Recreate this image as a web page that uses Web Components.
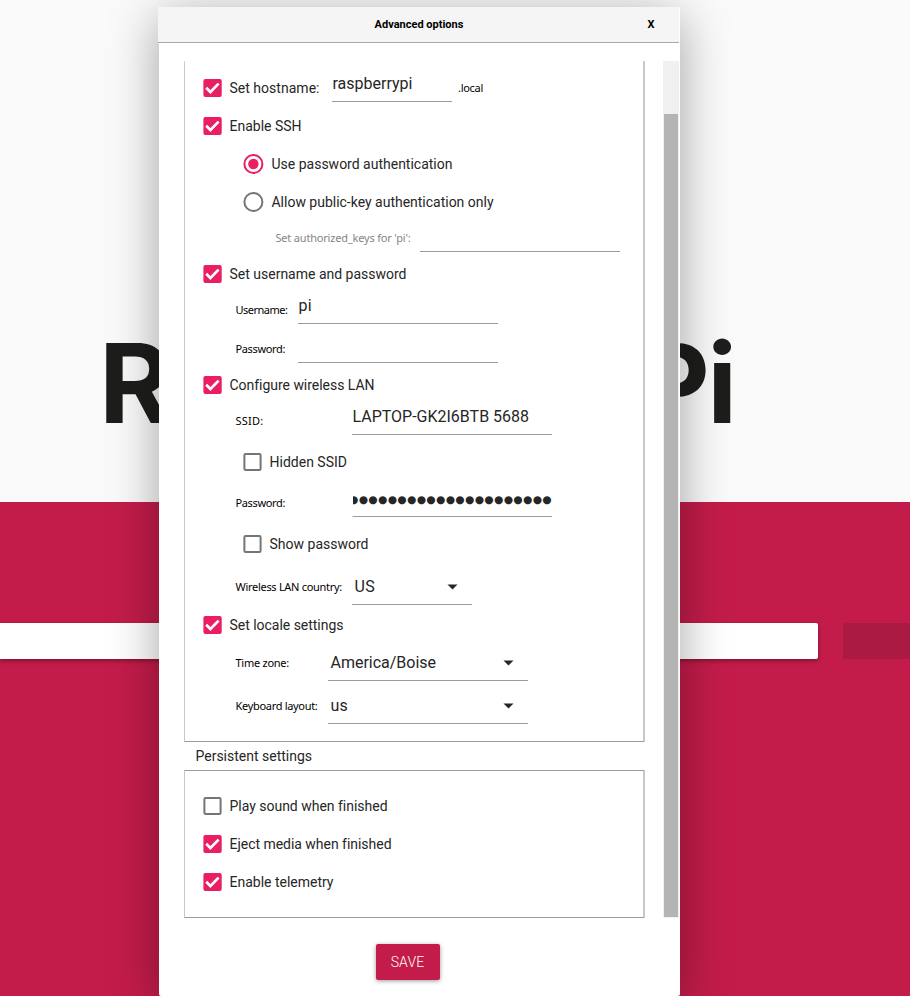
<!DOCTYPE html>
<html lang="en"><head><meta charset="utf-8"><title>Advanced options</title>
<style>
html,body{margin:0;height:996px;overflow:hidden;background:#fafafa;font-family:Roboto,sans-serif;color:#262626}
</style></head><body>
<imager-backdrop></imager-backdrop>
<options-dialog>
  <options-group style="height:680px" open-top>
    <field-row style="margin:10px 0 2px;padding-left:18px"><check-box checked w="90">Set hostname:</check-box><text-field style="width:120px;margin-left:12.5px" w="80">raspberrypi</text-field><small-label style="margin-left:5.5px" w="25">.local</small-label></field-row>
    <check-box checked w="72">Enable SSH</check-box>
    <radio-button checked w="181">Use password authentication</radio-button>
    <radio-button w="222">Allow public-key authentication only</radio-button>
    <field-row style="padding-left:90px"><small-label muted w="135" style="width:145px">Set authorized_keys for 'pi':</small-label><text-field style="width:200px"></text-field></field-row>
    <check-box checked w="177">Set username and password</check-box>
    <field-row style="margin-bottom:5px"><small-label style="width:63px" w="52">Username:</small-label><text-field style="width:200px" w="13.5">pi</text-field></field-row>
    <field-row><small-label style="width:63px" w="49.5">Password:</small-label><text-field style="width:200px"></text-field></field-row>
    <check-box checked w="144.5">Configure wireless LAN</check-box>
    <field-row style="margin-bottom:5px"><small-label style="width:117px" w="28">SSID:</small-label><text-field style="width:200px" w="176.5">LAPTOP-GK2I6BTB 5688</text-field></field-row>
    <check-box indent w="77.5">Hidden SSID</check-box>
    <field-row style="margin:5px 0"><small-label style="width:117px" w="49.5">Password:</small-label><text-field style="width:200px" secret w="203">●●●●●●●●●●●●●●●●●●●●●</text-field></field-row>
    <check-box indent w="99">Show password</check-box>
    <field-row tall style="margin-top:5px"><small-label style="width:117px" w="106.5">Wireless LAN country:</small-label><combo-box style="width:120px" w="20.5">US</combo-box></field-row>
    <check-box checked w="114">Set locale settings</check-box>
    <field-row tall style="margin-bottom:5px"><small-label style="width:93px" w="53.5">Time zone:</small-label><combo-box style="width:200px" w="105.5">America/Boise</combo-box></field-row>
    <field-row tall><small-label style="width:93px" w="82">Keyboard layout:</small-label><combo-box style="width:200px" w="17.5">us</combo-box></field-row>
  </options-group>
  <group-title w="116.5">Persistent settings</group-title>
  <options-group style="height:146px">
    <check-box style="margin-top:16px" w="157.5">Play sound when finished</check-box>
    <check-box checked w="161.5">Eject media when finished</check-box>
    <check-box checked w="104">Enable telemetry</check-box>
  </options-group>
</options-dialog>
<script>
// Base: renders a shadow template and tracks its text out to the width given in "w".
class Base extends HTMLElement{
  connectedCallback(){
    if(this.shadowRoot)return;
    this.attachShadow({mode:'open'}).innerHTML='<style>:host{display:flex;box-sizing:border-box;white-space:pre}.t{flex:none;display:inline-block}</style>'+this.view();
    const t=this.shadowRoot.querySelector('.t'),w=+this.getAttribute('w');
    if(t&&w){const n=this.textContent.length;t.style.letterSpacing=((w-t.getBoundingClientRect().width)/n)+'px';}
  }
}
const def=(n,v)=>customElements.define(n,class extends Base{view(){return v.call(this)}});

def('imager-backdrop',()=>`<style>
:host{flex-direction:column;height:996px;width:910px;background:#fafafa}
.logo{height:502px;box-sizing:border-box;padding:316px 173px 0 99px;display:flex;justify-content:space-between;font:660 110px/134px Inter,sans-serif;color:#1d1d1b}
.p{letter-spacing:-2.5px}
.band{flex:1;background:#c31c4a;padding-top:121px;display:flex;gap:25px;align-items:flex-start}
.a{width:818px;height:36px;background:#fff;border-radius:0 2px 2px 0;box-shadow:0 2px 4px rgba(0,0,0,.35)}
.b{flex:1;height:36px;background:#ab1a42;border-radius:2px 0 0 2px}
</style><div class="logo"><span>R</span><span><span class="p">P</span>i</span></div><div class="band"><div class="a"></div><div class="b"></div></div>`);

def('options-dialog',()=>`<style>
:host{position:absolute;left:159px;top:7px;width:521px;height:989px;flex-direction:column;background:#fff;border-radius:2px;box-shadow:0 10px 50px rgba(0,0,0,.36)}
header{flex:none;height:36px;box-sizing:border-box;border-bottom:1px solid #a9a9a9;background:#f5f5f5;display:grid;grid-template-columns:57px 1fr 57px;align-items:center;text-align:center;font:700 11px/14px Roboto,sans-serif;color:#000;margin:0 1px 0 -1px;padding:1px 0 0 1px}
header span:last-child{padding-left:1px}
main{height:857px;margin:18px 1px 0 25px;display:flex;justify-content:space-between}
.col{width:461px;display:flex;flex-direction:column}
.bar{width:16px;background:#f0f0f0;padding:53px 1px 1px;box-sizing:border-box}
.thumb{height:100%;background:#b4b4b4}
footer{display:flex;justify-content:center;padding:26px 23px 0 0}
.save{width:64px;height:36px;border-radius:2px;background:#c31c4a;color:#fff;font:300 14px/36px Roboto,sans-serif;text-align:center;letter-spacing:.15px;text-indent:-1px;box-shadow:0 1px 4px rgba(0,0,0,.4)}
</style><header><i></i><span>Advanced options</span><span>X</span></header>
<main><div class="col"><slot></slot></div><div class="bar"><div class="thumb"></div></div></main>
<footer><div class="save">SAVE</div></footer>`);

def('options-group',()=>`<style>
:host{flex:none;flex-direction:column;box-sizing:content-box;border:solid #c8c8c8;border-width:1px 2px 1px 1px;border-top-color:#9b9b9b;border-bottom-color:#9b9b9b;border-radius:1px;width:458px}
:host([open-top]){border-top:0}
</style><slot></slot>`);

def('group-title',()=>`<style>:host{height:29px;align-items:center;padding:0 0 1px 11.5px;font-size:14px}</style><span class="t"><slot></slot></span>`);

def('field-row',()=>`<style>:host{height:34px;flex:none;align-items:stretch;padding-left:50px}:host([tall]){height:38px}::slotted(check-box){padding-left:0!important;height:34px!important}</style><slot></slot>`);

def('small-label',()=>`<style>:host{flex:none;align-items:center;padding-left:.5px;font:11px/14px "Noto Sans",sans-serif;color:#000}:host([muted]){color:#858585}</style><span class="t"><slot></slot></span>`);

def('text-field',()=>`<style>
:host{height:31px;border-bottom:1px solid #9b9b9b;align-items:center;padding:0 0 4px .5px;font:16px/20px Roboto,sans-serif;overflow:hidden;flex:none}
.t{padding-top:.4px}
:host([secret]){justify-content:flex-end;padding:0 0 4px;font:10.6px/20px "DejaVu Sans",sans-serif;border-left:1px solid #fff}
</style><span class="t"><slot></slot></span>`);

def('combo-box',()=>`<style>
:host{height:37px;border-bottom:1px solid #9b9b9b;align-items:center;justify-content:space-between;padding:2px 14px 0 2.5px;font:16px/20px Roboto,sans-serif;flex:none}
svg{display:block}
</style><span class="t"><slot></slot></span><svg width="11" height="6"><path d="M.5.5h10l-5 5z" fill="#262626"/></svg>`);

def('check-box',function(){const c=this.hasAttribute('checked');return `<style>
:host{height:38px;flex:none;align-items:center;padding-left:18px;gap:7.5px;font-size:14px}
:host([indent]){padding-left:58px}
svg{display:block}
</style><svg width="19" height="18" viewBox="-.4 0 19 18">${c?'<rect width="18.3" height="18" rx="2" fill="#e91e63"/><path d="M2.8 8.8 7 13 15.2 4.6" fill="none" stroke="#fff" stroke-width="2.7"/>':'<rect x="1" y="1" width="16.2" height="16" rx="1.2" fill="#fff" stroke="#757575" stroke-width="2"/>'}</svg><span class="t"><slot></slot></span>`});

def('radio-button',function(){const c=this.hasAttribute('checked');return `<style>
:host{height:38px;flex:none;align-items:center;padding-left:58px;gap:7.5px;font-size:14px}
svg{display:block}
</style><svg width="21" height="20"><circle cx="10.4" cy="10" r="9" fill="#fff" stroke="${c?'#e91e63':'#757575'}" stroke-width="2"/>${c?'<circle cx="10.4" cy="10" r="5.2" fill="#e91e63"/>':''}</svg><span class="t"><slot></slot></span>`});
</script></body></html>
